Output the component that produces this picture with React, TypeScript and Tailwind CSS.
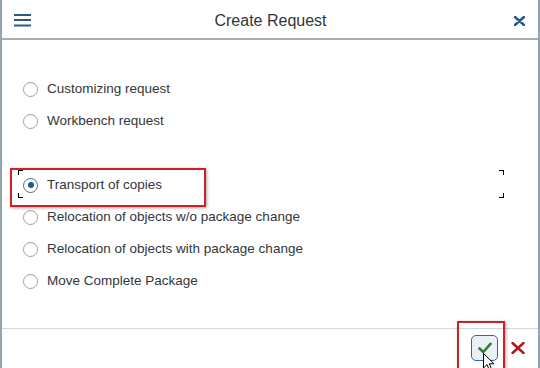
import { useState } from 'react'

const OPTIONS_TOP = ['Customizing request', 'Workbench request']
const OPTIONS_BOTTOM = [
  'Transport of copies',
  'Relocation of objects w/o package change',
  'Relocation of objects with package change',
  'Move Complete Package',
]

const Radio = ({ checked }: { checked: boolean }) => (
  <span
    className={`flex items-center justify-center w-[15px] h-[15px] rounded-full border bg-white flex-shrink-0 ${
      checked ? 'border-[#5a6a78]' : 'border-[#9aa1a8]'
    }`}
  >
    {checked && <span className="w-[6px] h-[6px] rounded-full bg-[#1b5c98]" />}
  </span>
)

const Row = ({ label, checked, onSelect }: { label: string; checked: boolean; onSelect: () => void }) => (
  <button onClick={onSelect} className="flex items-center h-[32px] pl-[21px] gap-[9px] text-left">
    <Radio checked={checked} />
    <span className="text-[13.5px] text-[#32363a]">{label}</span>
  </button>
)

// focus corner bracket
const Corner = ({ className }: { className: string }) => (
  <span className={`absolute w-[5px] h-[5px] border-black ${className}`} />
)

export default function App() {
  const [selected, setSelected] = useState('Transport of copies')

  return (
    <div
      className="relative w-[540px] h-[368px] bg-white overflow-hidden flex flex-col border-l-2 border-r-2 border-[#95a3ae]"
      style={{ fontFamily: '"Liberation Sans", Arial, sans-serif' }}
    >
      {/* Header */}
      <div className="flex items-center justify-between h-[40px] pt-[1px] border-b-2 border-[#a3aeb8] pl-[12px] pr-[13px] flex-shrink-0">
        <svg width="17" height="14" viewBox="0 0 17 14" className="mt-[1px]">
          <rect x="0" y="1" width="17" height="2" fill="#2c5a85" />
          <rect x="0" y="6" width="17" height="2" fill="#2c5a85" />
          <rect x="0" y="11.5" width="17" height="2" fill="#2c5a85" />
        </svg>
        <span className="text-[16px] text-[#32363a] pt-[2px] -ml-[4px]">Create Request</span>
        <svg width="11" height="10" viewBox="0 0 11 10" className="mt-[2px]">
          <path d="M1 1 L10 9 M10 1 L1 9" stroke="#1f5a8f" strokeWidth="2.4" strokeLinecap="round" />
        </svg>
      </div>

      {/* Body */}
      <div className="flex-1 flex flex-col pt-[33px]">
        {OPTIONS_TOP.map((o) => (
          <Row key={o} label={o} checked={selected === o} onSelect={() => setSelected(o)} />
        ))}
        <div className="h-[32px]" />
        {OPTIONS_BOTTOM.map((o) => (
          <Row key={o} label={o} checked={selected === o} onSelect={() => setSelected(o)} />
        ))}
      </div>

      {/* Footer */}
      <div className="h-[40px] border-t border-[#d6d6d6] flex items-start justify-end gap-[13px] pr-[13px] pt-[6px] flex-shrink-0">
        <button className="w-[27px] h-[26px] rounded-[5px] border border-[#3d6588] bg-[#e9f1f7] flex items-center justify-center">
          <svg width="14" height="12" viewBox="0 0 14 12">
            <path d="M1.5 6.5 L5.3 10 L12.5 1.8" fill="none" stroke="#2d7f37" strokeWidth="2.6" strokeLinecap="round" strokeLinejoin="round" />
          </svg>
        </button>
        <button className="mt-[7px]">
          <svg width="14" height="12" viewBox="0 0 14 12">
            <path d="M1.5 1 L12.5 11 M12.5 1 L1.5 11" stroke="#b3131b" strokeWidth="2.4" strokeLinecap="round" />
          </svg>
        </button>
      </div>

      {/* Focus frame around selected row */}
      <div className="absolute left-[16px] top-[170px] w-[486px] h-[28px] pointer-events-none">
        <Corner className="left-0 top-0 border-l-[1.5px] border-t-[1.5px]" />
        <Corner className="right-0 top-0 border-r-[1.5px] border-t-[1.5px]" />
        <Corner className="left-0 bottom-0 border-l-[1.5px] border-b-[1.5px]" />
        <Corner className="right-0 bottom-0 border-r-[1.5px] border-b-[1.5px]" />
      </div>

      {/* Red annotation boxes */}
      <div className="absolute left-[8px] top-[168px] w-[196px] h-[39px] border-[2.5px] border-[#cf2027] shadow-[1px_1px_3px_rgba(0,0,0,0.35)] pointer-events-none" />
      <div className="absolute left-[455px] top-[321px] w-[48px] h-[50px] border-[2.5px] border-[#cf2027] shadow-[1px_1px_3px_rgba(0,0,0,0.35)] pointer-events-none" />

      {/* Mouse cursor */}
      <svg width="12" height="19" viewBox="0 0 12 19" className="absolute left-[481px] top-[353px] pointer-events-none">
        <path d="M0.5 0.5 L0.5 15 L4 11.6 L6.6 17.6 L8.8 16.6 L6.3 10.8 L11 10.8 Z" fill="white" stroke="black" strokeWidth="1" strokeLinejoin="round" />
      </svg>
    </div>
  )
}
